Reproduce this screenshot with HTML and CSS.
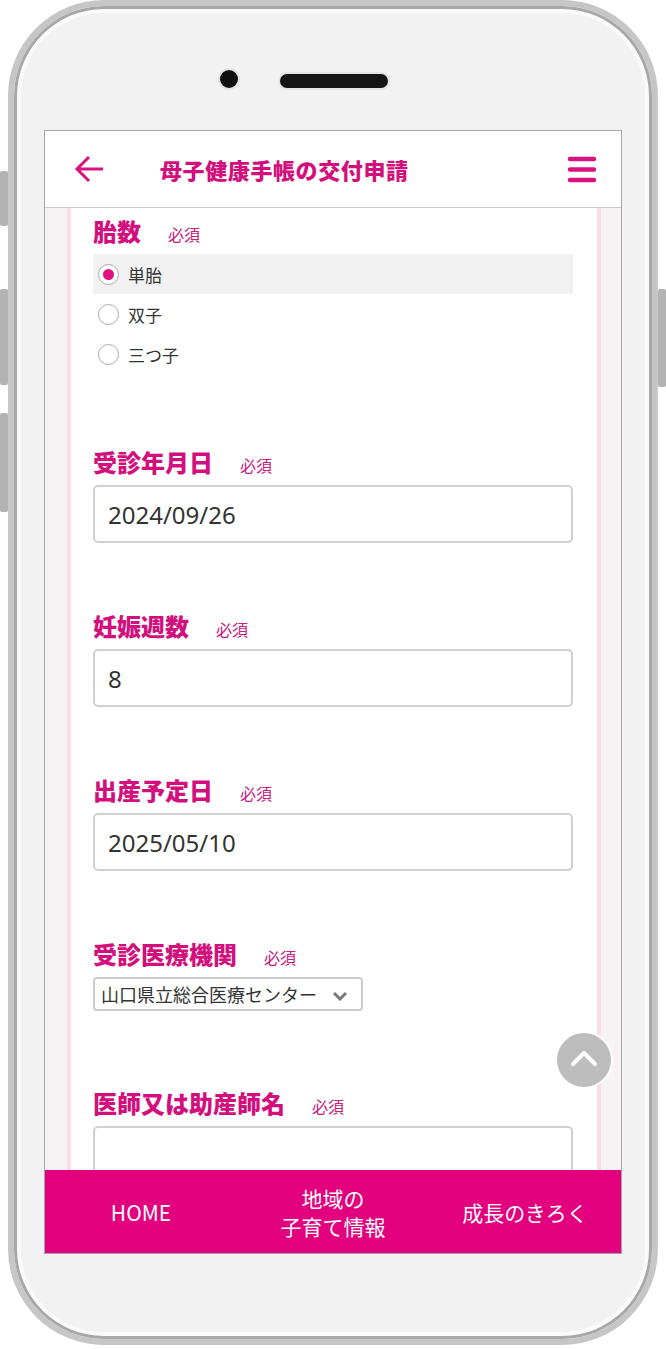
FILE: index.html
```html
<!DOCTYPE html>
<html lang="ja">
<head>
    <meta charset="UTF-8">
    <meta name="viewport" content="width=device-width, initial-scale=1.0">
    <title>母子健康手帳の交付申請</title>
    <link rel="stylesheet" href="styles.css">
</head>
<body>

    <div class="phone">
        <!-- side buttons -->
        <span class="side-btn side-btn-mute"></span>
        <span class="side-btn side-btn-up"></span>
        <span class="side-btn side-btn-down"></span>
        <span class="side-btn side-btn-power"></span>

        <div class="phone-top">
            <span class="camera"></span>
            <span class="speaker"></span>
        </div>

        <div class="screen">
            <header class="app-header">
                <svg class="back-icon" width="30" height="28" viewBox="0 0 30 28">
                    <path d="M15 2 L3 14 L15 26 M3 14 H29" fill="none" stroke="#d8137f" stroke-width="3"/>
                </svg>
                <h1 class="app-title">母子健康手帳の交付申請</h1>
                <svg class="menu-icon" width="30" height="27" viewBox="0 0 30 27">
                    <path d="M3 3 H27 M3 13.5 H27 M3 24 H27" fill="none" stroke="#d8137f" stroke-width="4.5" stroke-linecap="round"/>
                </svg>
            </header>

            <main class="content">
                <div class="card">

                    <div class="field field-radio">
                        <div class="label">胎数<span class="req">必須</span></div>
                        <div class="radio-list">
                            <div class="radio-row checked"><span class="radio"></span>単胎</div>
                            <div class="radio-row"><span class="radio"></span>双子</div>
                            <div class="radio-row"><span class="radio"></span>三つ子</div>
                        </div>
                    </div>

                    <div class="field">
                        <div class="label">受診年月日<span class="req">必須</span></div>
                        <input class="text-input" type="text" value="2024/09/26" readonly>
                    </div>

                    <div class="field">
                        <div class="label">妊娠週数<span class="req">必須</span></div>
                        <input class="text-input" type="text" value="8" readonly>
                    </div>

                    <div class="field">
                        <div class="label">出産予定日<span class="req">必須</span></div>
                        <input class="text-input" type="text" value="2025/05/10" readonly>
                    </div>

                    <div class="field field-select">
                        <div class="label">受診医療機関<span class="req">必須</span></div>
                        <div class="select">
                            <span>山口県立総合医療センター</span>
                            <svg width="16" height="10" viewBox="0 0 16 10">
                                <path d="M2 2 L8 8 L14 2" fill="none" stroke="#7a7a7a" stroke-width="3"/>
                            </svg>
                        </div>
                    </div>

                    <div class="field">
                        <div class="label">医師又は助産師名<span class="req">必須</span></div>
                        <input class="text-input" type="text" value="" readonly>
                    </div>

                </div>
            </main>

            <!-- back to top -->
            <div class="to-top">
                <svg width="28" height="17" viewBox="0 0 28 17">
                    <path d="M3 14 L14 3 L25 14" fill="none" stroke="#fff" stroke-width="4" stroke-linecap="round" stroke-linejoin="round"/>
                </svg>
            </div>

            <nav class="bottom-nav">
                <a class="nav-item">HOME</a>
                <a class="nav-item">地域の<br>子育て情報</a>
                <a class="nav-item">成長のきろく</a>
            </nav>
        </div>
    </div>

</body>
</html>
```

FILE: styles.css
```css
body {
    margin: 0;
    background: #fff;
    font-family: "Noto Sans CJK JP", "Noto Sans", sans-serif;
}

/* Phone frame */
.phone {
    position: relative;
    box-sizing: border-box;
    width: 650px;
    height: 1345px;
    margin-left: 8px;
    padding: 0 30px;
    border: 6px solid #c6c6c6;
    border-radius: 96px;
    background: #f2f2f2;
    box-shadow: inset 0 0 0 3px #a8a8a8, inset 0 0 0 7px #fafafa;
}

.side-btn {
    position: absolute;
    width: 8px;
    background: #b3b3b3;
    border-radius: 2px;
}

.side-btn-mute { left: -14px; top: 165px; height: 55px; }
.side-btn-up { left: -14px; top: 283px; height: 96px; }
.side-btn-down { left: -14px; top: 407px; height: 99px; }
.side-btn-power { right: -14px; top: 283px; height: 98px; }

.phone-top {
    box-sizing: border-box;
    height: 124px;
    padding: 64px 0 0 176px;
    display: flex;
    align-items: flex-start;
    gap: 42px;
}

.camera {
    width: 18px;
    height: 18px;
    border-radius: 50%;
    background: #111;
    box-shadow: 0 0 0 2px #e4e4e4;
}

.speaker {
    width: 108px;
    height: 14px;
    margin-top: 4px;
    border-radius: 7px;
    background: #151515;
    box-shadow: 0 0 0 2px #e4e4e4;
}

/* Screen */
.screen {
    position: relative;
    display: flex;
    flex-direction: column;
    height: 1124px;
    box-sizing: border-box;
    border: 1px solid #a6a6a6;
    background: #fff;
    overflow: hidden;
}

.app-header {
    display: flex;
    align-items: center;
    height: 76px;
    padding: 0 24px 0 29px;
    border-bottom: 1px solid #c9c9c9;
    background: #fff;
    flex-shrink: 0;
}

.app-title {
    margin: 0 0 0 56px;
    font-size: 22px;
    font-weight: 900;
    letter-spacing: 0.6px;
    color: #d20f7c;
}

.menu-icon {
    margin-left: auto;
}

.content {
    flex: 1;
    display: flex;
    flex-direction: column;
    padding: 0 20px 0 22px;
    background: #f7f2f4;
    overflow: hidden;
}

.card {
    flex: 1;
    padding: 8px 24px 0 22px;
    background: #fff;
    border-left: 4px solid #fadce6;
    border-right: 4px solid #fadce6;
}

/* Form fields */
.field {
    margin-bottom: 68px;
}

.field-radio {
    margin-bottom: 73px;
}

.field-select {
    margin-bottom: 77px;
}

.label {
    height: 30px;
    line-height: 30px;
    margin-bottom: 8px;
    font-size: 24px;
    font-weight: 900;
    color: #d20f7c;
    white-space: nowrap;
}

.req {
    margin-left: 27px;
    font-size: 16px;
    font-weight: 400;
    color: #c8207f;
}

.radio-list {
    display: flex;
    flex-direction: column;
}

.radio-row {
    display: flex;
    align-items: center;
    gap: 9px;
    height: 40px;
    padding-left: 5px;
    font-size: 17px;
    color: #333;
}

.radio-row.checked {
    background: #f1f1f1;
}

.radio {
    box-sizing: border-box;
    width: 21px;
    height: 21px;
    border-radius: 50%;
    border: 1.5px solid #a9a9a9;
    background: #fff;
    display: flex;
    align-items: center;
    justify-content: center;
}

.checked .radio::after {
    content: "";
    width: 11px;
    height: 11px;
    border-radius: 50%;
    background: #e0107f;
}

.text-input {
    display: block;
    box-sizing: border-box;
    width: 100%;
    height: 58px;
    margin: 0;
    padding: 0 13px;
    border: 2px solid #d0d0d0;
    border-radius: 5px;
    font-family: "Noto Sans", sans-serif;
    font-size: 24px;
    color: #333;
    outline: none;
}

.select {
    box-sizing: border-box;
    width: 270px;
    height: 34px;
    display: flex;
    align-items: center;
    justify-content: space-between;
    padding: 0 13px 0 6px;
    border: 2px solid #cbcbcb;
    border-radius: 4px;
    font-size: 18px;
    color: #333;
    white-space: nowrap;
}

.select svg {
    margin-top: 4px;
}

/* Back to top button */
.to-top {
    position: absolute;
    right: 8px;
    top: 900px;
    box-sizing: border-box;
    width: 58px;
    height: 58px;
    border-radius: 50%;
    border: 2px solid #fff;
    background: #bdbdbd;
    display: flex;
    align-items: center;
    justify-content: center;
}

.to-top svg {
    margin-top: -4px;
}

/* Bottom nav */
.bottom-nav {
    display: grid;
    grid-template-columns: repeat(3, 1fr);
    height: 83px;
    flex-shrink: 0;
    background: #e2007e;
}

.nav-item {
    display: flex;
    align-items: center;
    justify-content: center;
    text-align: center;
    font-size: 21px;
    line-height: 28px;
    color: #fff;
}
```
